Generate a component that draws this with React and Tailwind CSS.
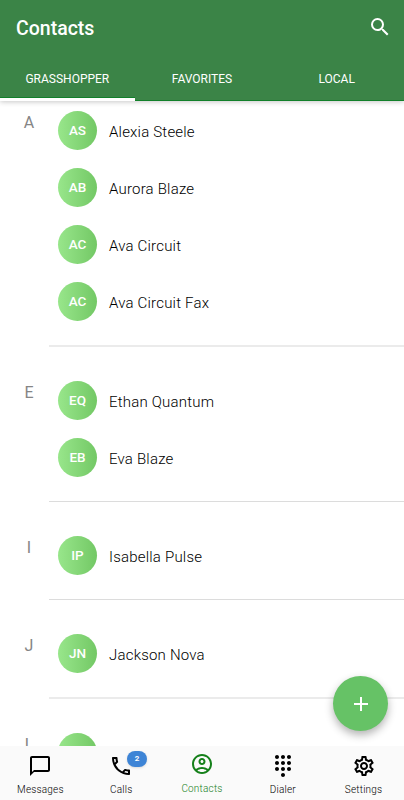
import {
    MdSearch,
    MdOutlineChatBubbleOutline,
    MdOutlinePhone,
    MdOutlineAccountCircle,
    MdDialpad,
    MdOutlineSettings,
    MdAdd,
} from "react-icons/md";

const tabs = ["GRASSHOPPER", "FAVORITES", "LOCAL"];

const groups = [
    { letter: "A", soft: true, names: ["Alexia Steele", "Aurora Blaze", "Ava Circuit", "Ava Circuit Fax"] },
    { letter: "E", names: ["Ethan Quantum", "Eva Blaze"] },
    { letter: "I", names: ["Isabella Pulse"] },
    { letter: "J", soft: true, names: ["Jackson Nova"] },
    { letter: "L", names: [""] },
];

const navItems = [
    { label: "Messages", Icon: MdOutlineChatBubbleOutline },
    { label: "Calls", Icon: MdOutlinePhone, badge: 2 },
    { label: "Contacts", Icon: MdOutlineAccountCircle, active: true },
    { label: "Dialer", Icon: MdDialpad },
    { label: "Settings", Icon: MdOutlineSettings },
];

const initials = (name) =>
    name
        .split(" ")
        .slice(0, 2)
        .map((part) => part.charAt(0))
        .join("");

function Header() {
    return (
        <header className="relative z-10 h-[101px] shrink-0 bg-[#3b8447] text-white shadow-[0_1px_5px_rgba(0,0,0,0.22)]">
            <div className="flex h-[55px] items-center justify-between pl-4 pr-3">
                <h1 className="pt-[2px] text-[19.5px] font-medium">Contacts</h1>
                <MdSearch className="-mt-[2px] size-6" />
            </div>
            <div className="flex h-[46px]">
                {tabs.map((tab, i) => (
                    <div
                        key={tab}
                        className={
                            i === 0
                                ? "flex flex-1 flex-col text-xs"
                                : "flex flex-1 flex-col border-b border-[#11802a] text-xs"
                        }
                    >
                        <span className="pt-4 text-center">{tab}</span>
                        {i === 0 && <span className="mt-auto h-1 border-t border-[#11802a] bg-white" />}
                    </div>
                ))}
            </div>
        </header>
    );
}

function ContactGroup({ letter, names, soft }) {
    return (
        <section className="flex pb-[25px]">
            <div className="w-[49px] shrink-0 pl-[9px] pt-[9px] text-center text-base text-[#858585]">{letter}</div>
            <div
                className={
                    soft
                        ? "flex-1 border-b-2 border-[#ebebeb] pb-[15px]"
                        : "flex-1 border-b border-[#dcdcdc] pb-[15px]"
                }
            >
                {names.map((name) => (
                    <div key={name} className="flex h-[57px] items-center gap-3 pl-[9px]">
                        <div className="flex size-[39px] items-center justify-center rounded-full bg-linear-to-r from-[#98e68b] to-[#73c865] text-[13.5px] font-medium text-white">
                            {initials(name)}
                        </div>
                        <div className="pt-[3px] text-[15px] font-[350] tracking-[0.2px] text-black">{name}</div>
                    </div>
                ))}
            </div>
        </section>
    );
}

function BottomNav() {
    return (
        <nav className="flex h-[54px] shrink-0 bg-[#fafafa]">
            {navItems.map(({ label, Icon, badge, active }) => (
                <div
                    key={label}
                    className={
                        active
                            ? "flex flex-1 flex-col items-center pt-1.5 text-[#15801a]"
                            : "flex flex-1 flex-col items-center pt-2 text-black"
                    }
                >
                    <div className="relative">
                        <Icon className="size-6" />
                        {badge && (
                            <span className="absolute -top-[3px] left-[17.5px] flex h-4 w-[20.5px] items-center justify-center rounded-full bg-[#3d84d6] text-[8px] font-bold text-white shadow-sm">
                                {badge}
                            </span>
                        )}
                    </div>
                    <span
                        className={
                            active
                                ? "mt-[7px] text-[10px] leading-3 font-[350] tracking-[0.2px]"
                                : "mt-[5.5px] text-[10px] leading-3 font-[350] tracking-[0.2px]"
                        }
                    >
                        {label}
                    </span>
                </div>
            ))}
        </nav>
    );
}

export default function App() {
    return (
        <div className="relative flex h-[800px] w-[404px] flex-col overflow-hidden bg-white font-[Roboto,sans-serif]">
            <Header />
            <main className="min-h-0 flex-1 overflow-hidden pt-px">
                {groups.map((group) => (
                    <ContactGroup key={group.letter} {...group} />
                ))}
            </main>
            <button className="absolute right-4 bottom-[69px] flex size-[55px] items-center justify-center rounded-full bg-[#66c266] text-white shadow-[0_4px_8px_rgba(0,0,0,0.3)]">
                <MdAdd className="size-6" />
            </button>
            <BottomNav />
        </div>
    );
}
